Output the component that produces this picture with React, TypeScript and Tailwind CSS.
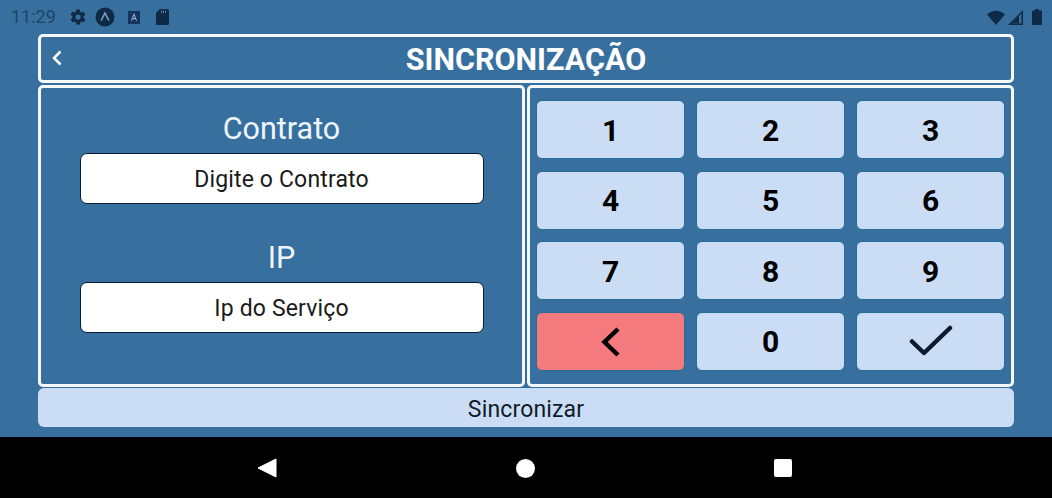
import React from "react";

const keys = ["1", "2", "3", "4", "5", "6", "7", "8", "9"];

function Key({ children, red }: { children: React.ReactNode; red?: boolean }) {
  return (
    <div
      className={`flex items-center justify-center rounded-[6px] border border-[#2a6a98] pt-[1px] text-[30px] font-bold text-black ${
        red ? "bg-[#f47a7d]" : "bg-[#cbddf4]"
      }`}
    >
      {children}
    </div>
  );
}

function Field({ label, hint }: { label: string; hint: string }) {
  return (
    <div className="flex flex-col items-center">
      <div className="h-[38px] pt-[2px] text-[30.500px] leading-[38px] text-[#eef5fd]">{label}</div>
      <div className="mt-[7px] flex h-[51px] w-[404px] items-center justify-center rounded-[7px] border border-[#0c1c30] bg-white pt-[4px] text-[23px] tracking-[0.15px] text-[#1a1a1a]">
        {hint}
      </div>
    </div>
  );
}

export default function App() {
  return (
    <div className="flex h-[498px] w-[1052px] flex-col overflow-hidden bg-[#37709f] font-['Roboto',sans-serif]">
      <div className="flex h-[34px] shrink-0 items-center pl-[11px] pr-[10px] text-[#12304f]">
        <span className="w-[59px] text-[18px] leading-[34px] text-[#1d4468]">11:29</span>
        <svg width="18" height="18" viewBox="0 0 24 24" fill="#0f2a47" className="ml-[-1px]">
          <path d="M19.4 13a7.5 7.5 0 0 0 0-2l2.1-1.6a.5.5 0 0 0 .1-.6l-2-3.5a.5.5 0 0 0-.6-.2l-2.5 1a7.4 7.4 0 0 0-1.7-1l-.4-2.6a.5.5 0 0 0-.5-.5h-4a.5.5 0 0 0-.5.5l-.4 2.6a7.4 7.4 0 0 0-1.7 1l-2.5-1a.5.5 0 0 0-.6.2l-2 3.5a.5.5 0 0 0 .1.6L4.6 11a7.5 7.5 0 0 0 0 2l-2.1 1.6a.5.5 0 0 0-.1.6l2 3.5a.5.5 0 0 0 .6.2l2.5-1a7.4 7.4 0 0 0 1.7 1l.4 2.6a.5.5 0 0 0 .5.5h4a.5.5 0 0 0 .5-.5l.4-2.6a7.4 7.4 0 0 0 1.7-1l2.5 1a.5.5 0 0 0 .6-.2l2-3.5a.5.5 0 0 0-.1-.6ZM12 15.5a3.5 3.5 0 1 1 0-7 3.5 3.5 0 0 1 0 7Z" />
        </svg>
        <svg width="20" height="20" viewBox="0 0 20 20" className="ml-[8px]">
          <circle cx="10" cy="10" r="9.500" fill="#0f2a47" />
          <path d="M6.200 13.500 10 6l3.800 7.500" fill="none" stroke="#7f9fc0" strokeWidth="1.600" />
        </svg>
        <svg width="12" height="13" viewBox="0 0 12 13" className="ml-[13px]">
          <rect width="12" height="13" fill="#15355f" />
          <path d="M3.400 9.600 6 3.400l2.600 6.200M4.400 7.600h3.200" fill="none" stroke="#8fb0d0" strokeWidth="1.100" />
        </svg>
        <svg width="13" height="16" viewBox="0 0 13 16" className="ml-[16px]">
          <path d="M4 0h7.500A1.500 1.500 0 0 1 13 1.500v13a1.500 1.500 0 0 1-1.500 1.500h-10A1.500 1.500 0 0 1 0 14.500V4Z" fill="#0f2a47" />
          <path d="M5.500 1.500v2.500M7.500 1.500v2.500M9.500 1.500v2.500" stroke="#567c9f" strokeWidth="1" />
        </svg>
        <div className="flex-1" />
        <svg width="18" height="15" viewBox="0 0 18 15">
          <path d="M0 4.500Q9-3 18 4.500L9 15Z" fill="#0f2a47" />
        </svg>
        <svg width="15" height="15" viewBox="0 0 15 15" className="ml-[3px]">
          <path d="M15 0v15H0ZM13.500 3.600 3.600 13.500h9.900Z" fill="#0f2a47" fillRule="evenodd" />
          <path d="M11 6.100v7.400H3.600Z" fill="#0f2a47" />
        </svg>
        <svg width="10" height="16" viewBox="0 0 10 16" className="ml-[9px]">
          <path d="M3 0h4v1.500h2a1 1 0 0 1 1 1V15a1 1 0 0 1-1 1H1a1 1 0 0 1-1-1V2.500a1 1 0 0 1 1-1h2Z" fill="#0f2a47" />
        </svg>
      </div>

      <div className="flex h-[403px] shrink-0 flex-col px-[38px]">
        <div className="relative flex h-[49px] shrink-0 items-center justify-center rounded-[5px] border-[3px] border-[#f4f7fc] pt-[2px] text-[30.500px] font-bold text-white">
          <svg width="12" height="18" viewBox="0 0 12 18" className="absolute left-[10px] top-[12px]">
            <path d="M9.500 2.500 3 9l6.500 6.500" fill="none" stroke="white" strokeWidth="2.500" />
          </svg>
          SINCRONIZAÇÃO
        </div>

        <div className="mt-[2px] flex h-[302px] shrink-0 gap-[2px]">
          <div className="flex w-[487px] flex-col gap-[33px] rounded-[5px] border-[3px] border-[#f4f7fc] pt-[20px]">
            <Field label="Contrato" hint="Digite o Contrato" />
            <Field label="IP" hint="Ip do Serviço" />
          </div>
          <div className="grid flex-1 grid-cols-3 grid-rows-4 gap-x-[11px] gap-y-[11.500px] rounded-[5px] border-[3px] border-[#f4f7fc] px-[6px] pb-[13px] pt-[12px]">
            {keys.map((k) => (
              <Key key={k}>{k}</Key>
            ))}
            <Key red>
              <svg width="24" height="32" viewBox="0 0 24 32">
                <path d="M19 3 5.500 16 19 29" fill="none" stroke="black" strokeWidth="4.500" />
              </svg>
            </Key>
            <Key>0</Key>
            <Key>
              <svg width="44" height="34" viewBox="0 0 44 34">
                <path d="M3 16.500 15 28 41 3" fill="none" stroke="#0c1c30" strokeWidth="4.500" strokeLinecap="round" strokeLinejoin="round" />
              </svg>
            </Key>
          </div>
        </div>

        <div className="mt-[1px] flex h-[39px] shrink-0 items-center justify-center rounded-[6px] bg-[#cbddf4] pt-[5px] text-[23px] tracking-[0.15px] text-[#101c2c]">
          Sincronizar
        </div>
      </div>

      <div className="flex flex-1 items-center bg-black pt-[1px]">
        <div className="flex w-full items-center justify-center gap-[239px] pr-[3px]">
          <svg width="20" height="20" viewBox="0 0 20 20">
            <path d="M1 10 19 1v18Z" fill="white" stroke="white" strokeLinejoin="round" />
          </svg>
          <div className="h-[19px] w-[19px] rounded-full bg-white" />
          <div className="h-[18px] w-[18px] rounded-[2px] bg-white" />
        </div>
      </div>
    </div>
  );
}
